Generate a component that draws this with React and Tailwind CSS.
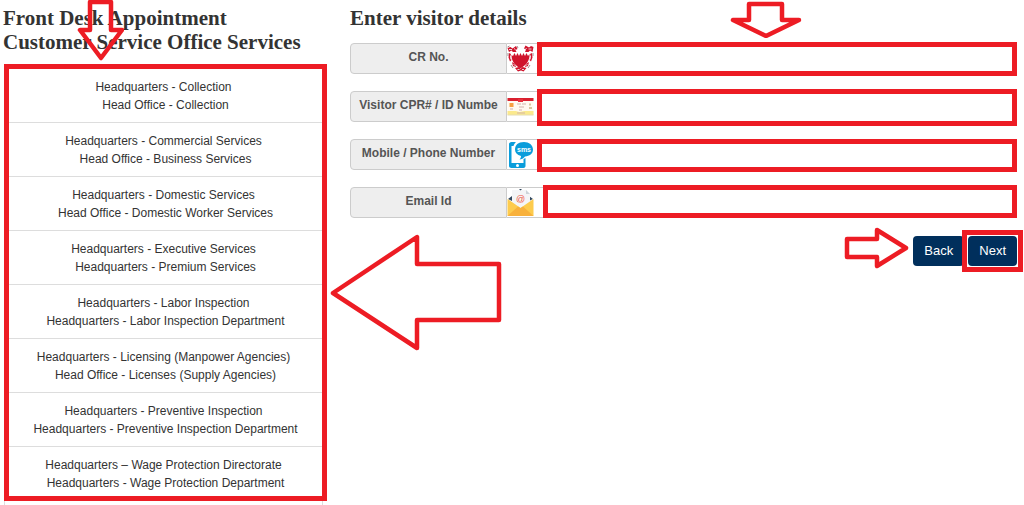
const SERVICES = [
  ['Headquarters - Collection', 'Head Office - Collection'],
  ['Headquarters - Commercial Services', 'Head Office - Business Services'],
  ['Headquarters - Domestic Services', 'Head Office - Domestic Worker Services'],
  ['Headquarters - Executive Services', 'Headquarters - Premium Services'],
  ['Headquarters - Labor Inspection', 'Headquarters - Labor Inspection Department'],
  ['Headquarters - Licensing (Manpower Agencies)', 'Head Office - Licenses (Supply Agencies)'],
  ['Headquarters - Preventive Inspection', 'Headquarters - Preventive Inspection Department'],
  ['Headquarters – Wage Protection Directorate', 'Headquarters - Wage Protection Department'],
]

const FIELDS = [
  { id: 'cr', label: 'CR No.', type: 'text', Icon: CrestIcon, frame: '-top-px -bottom-0.5 left-0' },
  { id: 'cpr', label: 'Visitor CPR# / ID Numbe', type: 'text', Icon: CardIcon, frame: '-top-0.5 -bottom-1 left-0' },
  { id: 'phone', label: 'Mobile / Phone Number', type: 'tel', Icon: SmsIcon, frame: 'top-0 -bottom-0.5 left-0' },
  { id: 'email', label: 'Email Id', type: 'email', Icon: MailIcon, frame: '-top-0.5 bottom-0 left-1.5' },
]

function CrestIcon() {
  return (
    <svg width="27" height="27" viewBox="0 0 27 27" aria-hidden="true">
      <g fill="#d0142c">
        <path d="M0.500 3l3-1 2 1.500L9 1l1.500 3-2 1 1 2H6L4.500 5.500 2 7z" />
        <path d="M26.500 2L24 1l-2 1.500L18.500 0.500 17 3.500l2 1-1 2.500h3.500L23 5.500 25.500 7z" />
        <path d="M2 8l2 1-1 3 1.500 3-1.500 1.500-1.500-4zM25 8l-2 1 1 3-1.500 3 1.500 1.500 1.500-4z" />
        <path d="M5 17l3 2 1 3-3-1zM22 17l-3 2-1 3 3-1zM8 23l4-1 1.500 2 2-2 4 1-3 3.500-2.500-1-3 1z" />
      </g>
      <path
        d="M2 4.500h3M7 3.500l1.500 1M24.500 4h-3M19.500 3l-1 1.500M3 13.500l2 1M24 13.500l-2 1M6.500 19.500l2 1M20.500 19.500l-2 1M10.500 24.500h2M15 24.500h2"
        stroke="#e9d3d5"
        strokeWidth="1"
      />
      <path d="M0.500 2l2-1M10 1l1 2M1 8v3M26 8v3M4 20l2 3M23 20l-2 3" stroke="#a48b8d" strokeWidth="1" />
      <path
        d="M4.500 10l1.500 1 1.500-3L9 11l1.500-3L12 11l1.500-3L15 11l1.500-3L18 11l1.500-3L21 11l1.500-2c0.500 6-3 11-9 14.500C7.500 20 4.500 16 4.500 10z"
        fill="#d0142c"
      />
    </svg>
  )
}

function CardIcon() {
  return (
    <svg width="27" height="27" viewBox="0 0 27 27" aria-hidden="true">
      <rect x="0.500" y="5" width="26" height="17" fill="#fffaf0" />
      <rect x="0.500" y="5" width="26" height="3" fill="#d9202f" />
      <path d="M11 6h5v3h-5z" fill="#e8323c" />
      <path d="M0.500 18h8l4 1 5-1h9v4h-26z" fill="#fbe98c" />
      <rect x="2.500" y="10" width="4" height="4" fill="#f7a040" />
      <path d="M10 11h4M15 11h4M12 14h5M3 16h3M12 17h3M10 20h8" stroke="#d3b3ab" strokeWidth="1" />
      <path d="M23 10.500v2M22 15h3" stroke="#d8c49c" strokeWidth="2" />
      <path d="M0.500 22h26" stroke="#e5dcb0" />
    </svg>
  )
}

function SmsIcon() {
  return (
    <svg width="27" height="27" viewBox="0 0 27 27" aria-hidden="true">
      <path d="M4.500 1H9c-1 1-2 2-2.500 4H4.500v17h12v-4l2-1v8c0 1-1 2-2 2h-12c-1.500 0-2.500-1-2.500-2V3c0-1 1-2 2.500-2z" fill="#0a9ddb" />
      <circle cx="10.500" cy="24.500" r="1.500" fill="#fff" />
      <path d="M17 1C22 1 26 4 26 8.500S22.500 15 18 15.500c-1.500 2-3.500 3-5.500 3 1-1 1.500-2 1.500-3.500-4-1-6-3.500-6-6.500C8 4 11 1 17 1z" fill="#0a9ddb" />
      <text x="17" y="11" textAnchor="middle" fontFamily="Liberation Sans, sans-serif" fontSize="7" fontWeight="700" fill="#fff">sms</text>
    </svg>
  )
}

function MailIcon() {
  return (
    <svg width="27" height="27" viewBox="0 0 27 27" aria-hidden="true">
      <path d="M1 10l4-3v5zM26 10l-4-3v5z" fill="#34495e" />
      <path d="M5 1h14l4 4v15H5z" fill="#f4f5f7" />
      <path d="M19 1v4h4z" fill="#ccd3da" />
      <path d="M12 0h3l-1.500 1.500z" fill="#34495e" />
      <text x="13.500" y="13" textAnchor="middle" fontFamily="Liberation Sans, sans-serif" fontSize="9" fill="#f0583f">@</text>
      <path d="M0.500 10l13 9 13-9v17h-26z" fill="#fdcb4d" />
      <path d="M0.500 27L11 17.500l2.500 1.500 2.500-1.500L26.500 27z" fill="#f8b13c" />
    </svg>
  )
}

function Arrow({ width, height, points, className }) {
  return (
    <svg
      width={width}
      height={height}
      viewBox={`0 0 ${width} ${height}`}
      className={className}
      aria-hidden="true"
    >
      <polygon points={points} fill="none" stroke="#ed1c24" strokeWidth="4.500" strokeLinejoin="round" />
    </svg>
  )
}

function ServiceList() {
  return (
    <section className="relative pl-1">
      <h2 className="-ml-px mb-2.5 font-['Liberation_Serif',serif] text-[21px] leading-6 font-bold whitespace-nowrap">
        Front Desk Appointment<br />Customer Service Office Services
      </h2>
      <ul className="border-[5px] border-[#ed1c24] text-center text-xs">
        {SERVICES.map(([title, office]) => (
          <li key={title} className="border-b border-[#ddd] pt-[9px] pr-1 pb-2 leading-[18px] last:border-b-0 last:pb-1">
            {title}
            <br />
            <span className="pl-1">{office}</span>
          </li>
        ))}
      </ul>
      <div className="mr-1 h-1 border-x border-[#ddd]" />
      <Arrow
        width={48}
        height={64}
        points="14,2 35,2 35,30 46,30 25,58 4,30 14,30"
        className="absolute -top-1.5 left-[76px]"
      />
      <Arrow
        width={174}
        height={118}
        points="3,59 87,3 87,30 169,30 169,86 87,86 87,114"
        className="absolute top-[228px] left-full ml-[3px]"
      />
    </section>
  )
}

function Field({ id, label, type, Icon, frame }) {
  return (
    <div className="flex h-[31px]">
      <label
        htmlFor={id}
        className="w-[157px] shrink-0 rounded-l border border-[#ccc] bg-[#eee] px-1.5 pt-1 text-center text-xs leading-[18px] font-bold whitespace-nowrap text-[#555]"
      >
        {label}
      </label>
      <span className="flex w-[30px] shrink-0 items-center border-y border-[#ccc]">
        <Icon />
      </span>
      <div className="relative flex-1">
        <input
          id={id}
          type={type}
          className="h-full w-full border-y border-[#ccc] bg-white px-3 outline-none"
        />
        <span className={`pointer-events-none absolute right-0 border-[5px] border-[#ed1c24] bg-white ${frame}`} />
      </div>
    </div>
  )
}

function VisitorForm() {
  return (
    <form className="relative" onSubmit={e => e.preventDefault()}>
      <h2 className="mb-[13px] font-['Liberation_Serif',serif] text-[21px] leading-6 font-bold">
        Enter visitor details
      </h2>
      <div className="flex flex-col gap-[17px]">
        {FIELDS.map(field => (
          <Field key={field.id} {...field} />
        ))}
      </div>
      <div className="mt-[15px] flex items-center justify-end gap-1">
        <Arrow width={66} height={42} points="4,12 34,12 34,3 63,21 34,39 34,30 4,30" className="-mt-1.5" />
        <button type="button" className="h-[30px] rounded bg-[#002f5c] px-[11px] text-white">
          Back
        </button>
        <div className="relative">
          <button type="submit" className="h-[30px] rounded bg-[#002f5c] px-[11px] text-white">
            Next
          </button>
          <span className="pointer-events-none absolute -inset-x-1.5 -top-1.5 -bottom-1.5 border-[5px] border-[#ed1c24]" />
        </div>
      </div>
      <Arrow
        width={72}
        height={38}
        points="19,4 52,4 52,20 69,20 36,36 3,20 19,20"
        className="absolute -top-1.5 left-[380px]"
      />
    </form>
  )
}

function App() {
  return (
    <main className="grid grid-cols-[327px_minmax(0,1fr)] gap-[23px] overflow-hidden bg-white pt-1.5 pr-[7px] font-['Liberation_Sans',Arial,sans-serif] text-[13px] text-[#333]">
      <ServiceList />
      <VisitorForm />
    </main>
  )
}

export default App
